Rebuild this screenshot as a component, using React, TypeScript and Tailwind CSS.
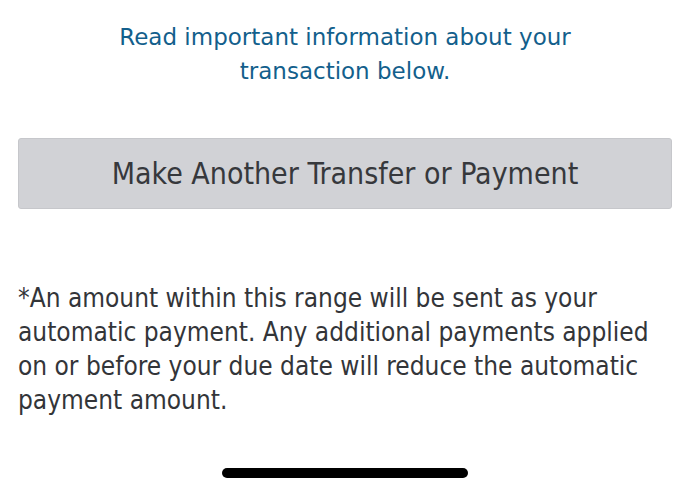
export default function App() {
  return (
    <div className="flex h-[492px] w-[690px] flex-col bg-white">
      {/* Heading */}
      <p className="mx-auto mt-[20px] w-[480px] text-center text-[23px] leading-[34px] text-[#135f8c] [font-family:'DejaVu_Sans',Verdana,sans-serif]">
        Read important information about your transaction below.
      </p>

      {/* Action button */}
      <button
        type="button"
        className="mx-[18px] mt-[50px] h-[71px] rounded-[3px] border border-[#c6c7cb] bg-[#d1d2d6] text-[30px] text-[#36383c] [font-family:'DejaVu_Sans_Condensed','DejaVu_Sans',sans-serif]"
      >
        Make Another Transfer or Payment
      </button>

      {/* Disclaimer */}
      <p className="ml-[18px] mr-[30px] mt-[72px] text-[26px] leading-[34px] text-[#333539] [font-family:'DejaVu_Sans_Condensed','DejaVu_Sans',sans-serif]">
        *An amount within this range will be sent as your automatic payment. Any additional payments applied on or before your due date will reduce the automatic payment amount.
      </p>

      <div className="flex-1" />

      {/* Home indicator */}
      <div className="mx-auto mb-[14px] h-[10px] w-[246px] rounded-full bg-black" />
    </div>
  );
}
